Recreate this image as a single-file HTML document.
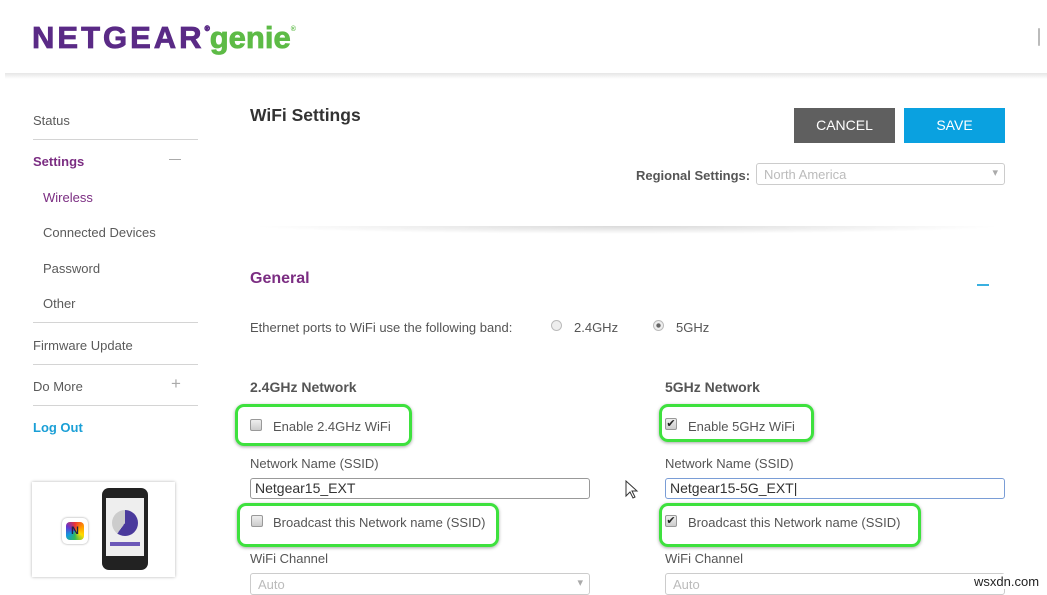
<!DOCTYPE html>
<html><head><meta charset="utf-8"><style>
*{margin:0;padding:0;box-sizing:border-box}
body{width:1047px;height:592px;overflow:hidden;background:#fff;font-family:"Liberation Sans",Arial,sans-serif;color:#555;position:relative}
.a{position:absolute;white-space:nowrap}
.nav{font-size:13px;color:#5a5a5a}
.ln{position:absolute;left:33px;width:165px;height:1px;background:#d4d4d4}
.gb{position:absolute;border:3px solid #3ee13e;border-radius:9px;box-shadow:0 1px 3px rgba(0,0,0,.35)}
.cb{position:absolute;width:12px;height:12px;border:1px solid #999;border-radius:2px;background:linear-gradient(#eee,#ccc)}
.lbl{font-size:14px;color:#555}
.inp{position:absolute;height:21px;border:1px solid #999;border-radius:3px;font-size:14px;color:#333;padding:1px 4px;line-height:17px}
.sel{position:absolute;height:22px;border:1px solid #ccc;border-radius:3px;font-size:13px;color:#bbb;padding:3px 7px}
.sel:after{content:"▾";position:absolute;right:6px;top:2px;color:#aaa;font-size:11px}
</style></head><body>
<div class="a" style="left:32px;top:20px;font-size:31px;font-weight:bold;color:#5a2a86;letter-spacing:3px;-webkit-text-stroke:0.8px #5a2a86">NETGEAR<span style="font-size:7px;vertical-align:top;position:relative;top:6px;letter-spacing:0">®</span><span style="color:#5dbb46;letter-spacing:0;-webkit-text-stroke:0.8px #5dbb46">genie</span><span style="font-size:7px;color:#5dbb46;vertical-align:top;position:relative;top:6px;-webkit-text-stroke:0">®</span></div>
<div class="a" style="left:1038px;top:28px;width:2px;height:18px;background:#bbb;border-radius:2px"></div>
<div class="a" style="left:5px;top:73px;width:1042px;height:6px;background:linear-gradient(#e6e6e6,#fff)"></div>

<div class="a nav" style="left:33px;top:113px">Status</div>
<div class="ln" style="top:139px"></div>
<div class="a nav" style="left:33px;top:154px;color:#7b2d82;font-weight:bold">Settings</div>
<div class="a" style="left:169px;top:159px;width:12px;height:1px;background:#aaa"></div>
<div class="a nav" style="left:43px;top:190px;color:#7b2d82">Wireless</div>
<div class="a nav" style="left:43px;top:225px">Connected Devices</div>
<div class="a nav" style="left:43px;top:261px">Password</div>
<div class="a nav" style="left:43px;top:296px">Other</div>
<div class="ln" style="top:322px"></div>
<div class="a nav" style="left:33px;top:338px">Firmware Update</div>
<div class="ln" style="top:364px"></div>
<div class="a nav" style="left:33px;top:379px">Do More</div>
<div class="a" style="left:171px;top:374px;font-size:17px;color:#aaa">+</div>
<div class="ln" style="top:405px"></div>
<div class="a nav" style="left:33px;top:420px;color:#1a9fd6;font-weight:bold">Log Out</div>

<div class="a" style="left:32px;top:482px;width:143px;height:95px;background:#fff;box-shadow:0 0 3px rgba(0,0,0,.3)"></div>
<div class="a" style="left:62px;top:518px;width:26px;height:26px;border-radius:5px;background:#fff;box-shadow:0 0 2px rgba(0,0,0,.4)"><div style="margin:4px;width:18px;height:18px;border-radius:4px;background:conic-gradient(#e33,#f90,#fd0,#3b5,#19d,#63c,#e33);color:#224;font-weight:bold;font-size:11px;text-align:center;line-height:18px">N</div></div>
<div class="a" style="left:102px;top:488px;width:46px;height:82px;border-radius:7px;background:#222"><div style="position:absolute;left:4px;top:10px;width:38px;height:58px;background:#eee"><div style="position:absolute;left:6px;top:12px;width:26px;height:26px;border-radius:50%;background:conic-gradient(#4a3a9c 0 60%,#ccc 60%)"></div><div style="position:absolute;left:4px;top:44px;width:30px;height:4px;background:#6c58b8"></div></div></div>

<div class="a" style="left:250px;top:105px;font-size:17.5px;font-weight:bold;color:#333">WiFi Settings</div>
<div class="a" style="left:794px;top:108px;width:101px;height:35px;background:#5f5f5f;color:#fff;font-size:14px;text-align:center;line-height:35px">CANCEL</div>
<div class="a" style="left:904px;top:108px;width:101px;height:35px;background:#0aa1e0;color:#fff;font-size:14px;text-align:center;line-height:35px">SAVE</div>
<div class="a" style="left:636px;top:168px;font-size:13px;font-weight:bold;color:#555">Regional Settings:</div>
<div class="sel" style="left:756px;top:163px;width:249px">North America</div>
<div class="a" style="left:250px;top:226px;width:755px;height:8px;background:radial-gradient(ellipse at 50% 0,rgba(0,0,0,.15),rgba(0,0,0,0) 70%)"></div>

<div class="a" style="left:250px;top:270px;font-size:16px;font-weight:bold;color:#7b2d82">General</div>
<div class="a" style="left:977px;top:284px;width:12px;height:2px;background:#3ab0e0"></div>
<div class="a lbl" style="left:250px;top:320px;font-size:13px">Ethernet ports to WiFi use the following band:</div>
<div class="a" style="left:551px;top:320px;width:11px;height:11px;border-radius:50%;border:1px solid #bbb;background:#eee"></div>
<div class="a lbl" style="left:574px;top:320px;font-size:13px">2.4GHz</div>
<div class="a" style="left:653px;top:320px;width:11px;height:11px;border-radius:50%;border:1px solid #bbb;background:radial-gradient(#666 30%,#eee 38%)"></div>
<div class="a lbl" style="left:676px;top:320px;font-size:13px">5GHz</div>

<div class="a" style="left:250px;top:379px;font-size:14px;font-weight:bold;color:#555">2.4GHz Network</div>
<div class="a" style="left:665px;top:379px;font-size:14px;font-weight:bold;color:#555">5GHz Network</div>

<div class="gb" style="left:235px;top:404px;width:177px;height:42px"></div>
<div class="cb" style="left:250px;top:419px"></div>
<div class="a lbl" style="left:273px;top:419px;font-size:13px">Enable 2.4GHz WiFi</div>
<div class="a lbl" style="left:250px;top:456px;font-size:13px">Network Name (SSID)</div>
<div class="inp" style="left:250px;top:478px;width:340px">Netgear15_EXT</div>
<div class="gb" style="left:237px;top:503px;width:262px;height:44px"></div>
<div class="cb" style="left:251px;top:515px"></div>
<div class="a lbl" style="left:273px;top:515px;font-size:13px">Broadcast this Network name (SSID)</div>
<div class="a lbl" style="left:250px;top:551px;font-size:13px">WiFi Channel</div>
<div class="sel" style="left:250px;top:573px;width:340px">Auto</div>

<div class="gb" style="left:659px;top:404px;width:155px;height:38px"></div>
<div class="cb" style="left:665px;top:418px;font-size:11px;color:#222;line-height:10px;text-align:center">✔</div>
<div class="a lbl" style="left:688px;top:419px;font-size:13px">Enable 5GHz WiFi</div>
<div class="a lbl" style="left:665px;top:456px;font-size:13px">Network Name (SSID)</div>
<div class="inp" style="left:665px;top:478px;width:340px;border-color:#7a9dd6">Netgear15-5G_EXT|</div>
<div class="gb" style="left:659px;top:503px;width:262px;height:44px"></div>
<div class="cb" style="left:665px;top:515px;font-size:11px;color:#222;line-height:10px;text-align:center">✔</div>
<div class="a lbl" style="left:688px;top:515px;font-size:13px">Broadcast this Network name (SSID)</div>
<div class="a lbl" style="left:665px;top:551px;font-size:13px">WiFi Channel</div>
<div class="sel" style="left:665px;top:573px;width:340px">Auto</div>
<div class="a" style="left:974px;top:574px;font-size:13px;color:#222;background:#fff">wsxdn.com</div>
<svg class="a" style="left:625px;top:480px" width="14" height="20" viewBox="0 0 14 20"><path d="M1 1v15l4-4 3 6 2-1-3-6h5z" fill="#fff" stroke="#333"/></svg>
</body></html>
